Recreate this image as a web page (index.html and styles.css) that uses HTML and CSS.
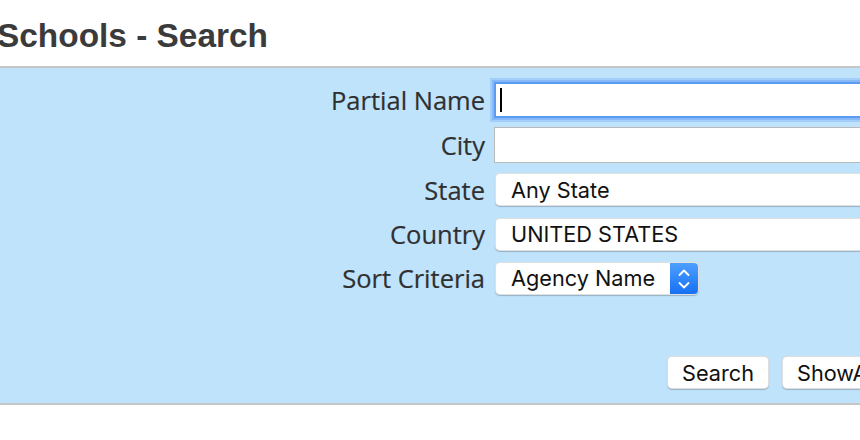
FILE: index.html
```html
<!DOCTYPE html>
<html lang="en">
<head>
<meta charset="utf-8">
<title>Schools - Search</title>
<link rel="stylesheet" href="styles.css">
</head>
<body>
<h1 class="title">Schools - Search</h1>
<div class="panel">
  <form class="form">
    <label class="label" for="pname">Partial Name</label>
    <div class="field">
      <input class="text-input focused" id="pname" type="text">
      <span class="caret"></span>
    </div>

    <label class="label" for="city">City</label>
    <div class="field">
      <input class="text-input" id="city" type="text">
    </div>

    <span class="label">State</span>
    <div class="field">
      <div class="select wide"><span class="select-text">Any State</span></div>
    </div>

    <span class="label">Country</span>
    <div class="field">
      <div class="select wide"><span class="select-text">UNITED STATES</span></div>
    </div>

    <span class="label">Sort Criteria</span>
    <div class="field">
      <div class="select sort">
        <span class="select-text">Agency Name</span>
        <span class="stepper">
          <svg width="28" height="32" viewBox="0 0 28 32">
            <path d="M9.5 12 L14 7.5 L18.5 12" fill="none" stroke="#fff" stroke-width="1.8" stroke-linecap="round" stroke-linejoin="round"/>
            <path d="M9.5 20 L14 24.5 L18.5 20" fill="none" stroke="#fff" stroke-width="1.8" stroke-linecap="round" stroke-linejoin="round"/>
          </svg>
        </span>
      </div>
    </div>
  </form>
  <div class="buttons">
    <button class="btn" type="button">Search</button>
    <button class="btn" type="button">ShowAll</button>
  </div>
</div>
</body>
</html>
```

FILE: styles.css
```css
html, body {
  margin: 0;
  padding: 0;
  overflow: hidden;
  background: #ffffff;
}

.title {
  margin: 17px 0 11px -3px;
  font-family: "Liberation Sans", Arial, sans-serif;
  font-weight: bold;
  font-size: 33.4px;
  line-height: 38px;
  color: #3b3b3b;
  white-space: nowrap;
}

.panel {
  background: #c0e3fc;
  border-top: 2px solid #c6c6c6;
  border-bottom: 2px solid #c6c6c6;
  padding: 9px 0 14px 0;
  width: 1200px;
}

.form {
  display: grid;
  grid-template-columns: 485px auto;
  grid-template-rows: 45px 45px 45px 44px 44px;
  column-gap: 9px;
  align-items: center;
}

.label {
  text-align: right;
  font-family: "Open Sans", "DejaVu Sans", sans-serif;
  font-size: 25.5px;
  line-height: 32px;
  color: #303030;
  white-space: nowrap;
  -webkit-text-stroke: 0.2px #303030;
}

.field {
  position: relative;
  display: flex;
  align-items: center;
}

.text-input {
  box-sizing: border-box;
  width: 420px;
  height: 36px;
  margin: 0;
  padding: 0 6px;
  border: 1px solid #b9b9b9;
  background: #ffffff;
  outline: none;
  font-family: "Inter", sans-serif;
  font-size: 20px;
}

.text-input.focused {
  border: 2px solid #5b9cf1;
  box-shadow: 0 0 0 2px #86b9f6, 0 0 0 4px rgba(150, 196, 248, 0.7);
}

.caret {
  position: absolute;
  left: 6px;
  top: 6px;
  width: 2px;
  height: 24px;
  background: #000000;
}

.select {
  box-sizing: border-box;
  height: 33px;
  margin-left: 1px;
  display: flex;
  align-items: center;
  background: #ffffff;
  border: 1px solid rgba(0, 0, 0, 0.12);
  border-radius: 5px;
  box-shadow: 0 1px 1px rgba(0, 0, 0, 0.22);
  font-family: "Inter", sans-serif;
  font-size: 21.7px;
  color: #111111;
  overflow: hidden;
}

.select.wide {
  width: 420px;
}

.select.sort {
  width: 204px;
  height: 33px;
}

.select-text {
  flex: 1;
  padding-left: 15px;
  white-space: nowrap;
}

.stepper {
  display: flex;
  width: 28px;
  height: 100%;
  background: linear-gradient(#4ea0fd, #1570f5);
}

.buttons {
  display: flex;
  gap: 13px;
  margin-top: 56px;
  padding-left: 667px;
}

.btn {
  box-sizing: border-box;
  height: 33px;
  padding: 0 14px;
  min-width: 101px;
  background: #ffffff;
  border: 1px solid rgba(0, 0, 0, 0.13);
  border-radius: 5px;
  box-shadow: 0 1px 1px rgba(0, 0, 0, 0.22);
  font-family: "Inter", sans-serif;
  font-size: 21.7px;
  color: #111111;
}
```
